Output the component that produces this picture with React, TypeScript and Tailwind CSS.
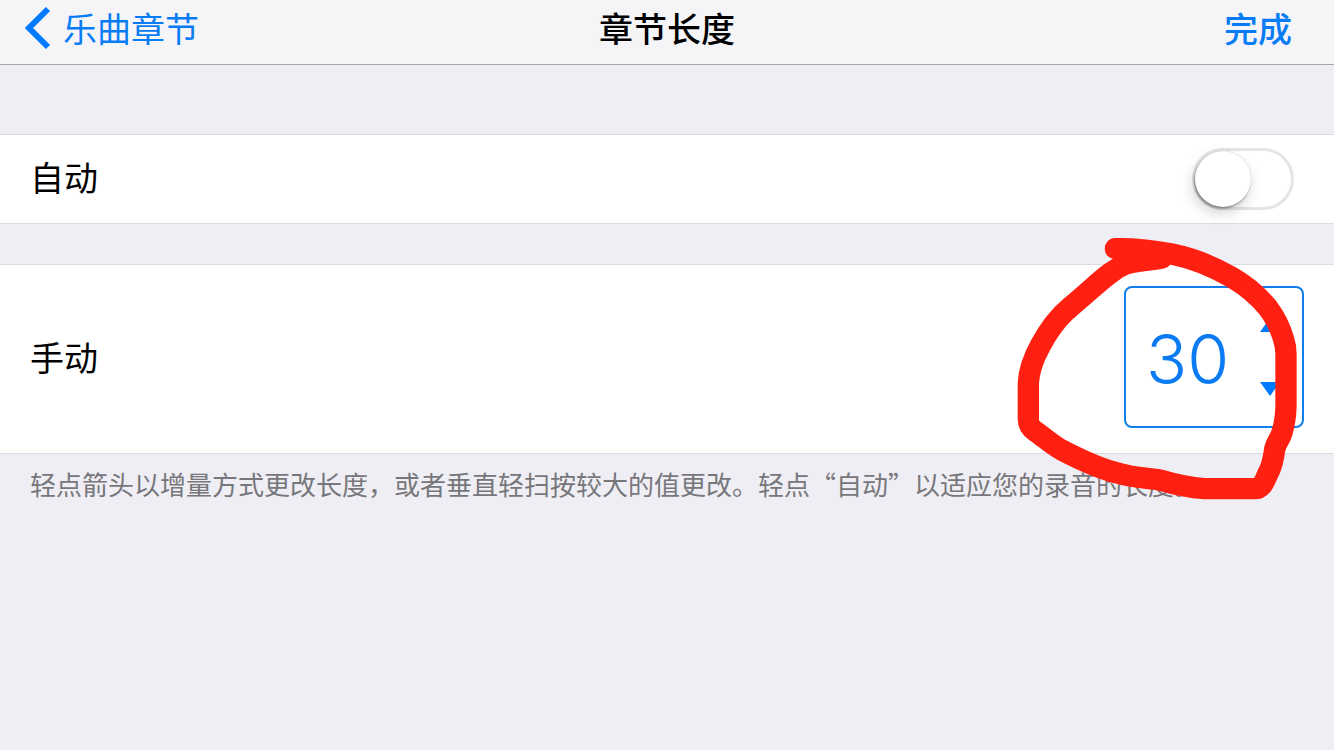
import React, { useState } from 'react'

const MIN_LENGTH = 1
const MAX_LENGTH = 999

interface LengthStepperProps {
  id: string
  value: number
  onChange: (value: number) => void
}

const LengthStepper: React.FC<LengthStepperProps> = ({
  id,
  value,
  onChange,
}) => {
  const update = (next: number) => {
    if (Number.isNaN(next)) return
    onChange(Math.min(MAX_LENGTH, Math.max(MIN_LENGTH, next)))
  }

  return (
    <div className="flex h-[142px] w-[180px] items-center justify-between rounded-lg border-2 border-[#117eeb] bg-white px-5">
      <input
        id={id}
        type="text"
        inputMode="numeric"
        value={value}
        onChange={(e) => update(parseInt(e.target.value, 10))}
        className="w-24 bg-transparent pt-1 font-['Inter',sans-serif] text-[68px] font-light leading-none text-[#0a7bf2] outline-none"
      />
      <div className="flex flex-col gap-[50px]">
        <button
          type="button"
          aria-label="增加"
          onClick={() => update(value + 1)}
          className="cursor-pointer px-0.5"
        >
          <svg width="20" height="14" viewBox="0 0 20 14" className="block">
            <path d="M10 0 20 14H0z" fill="#007aff" />
          </svg>
        </button>
        <button
          type="button"
          aria-label="减少"
          onClick={() => update(value - 1)}
          className="cursor-pointer px-0.5"
        >
          <svg width="20" height="14" viewBox="0 0 20 14" className="block">
            <path d="M0 0H20L10 14z" fill="#007aff" />
          </svg>
        </button>
      </div>
    </div>
  )
}

// Red marker stroke drawn around the stepper
const MarkerCircle: React.FC = () => (
  <svg
    width="334"
    height="280"
    viewBox="0 0 1002 840"
    fill="none"
    aria-hidden="true"
    className="pointer-events-none absolute -top-[34px] right-0 z-10"
  >
    <path
      d="M346 56 C400 55 465 62 515 72 C575 84 640 110 695 142 C740 168 775 198 805 235 C830 268 842 298 850 325 C856 343 858 355 858 372 L858 530 C857 560 853 585 846 608 C842 624 828 638 824 658 C820 690 816 705 808 722 C794 748 790 776 764 776 L614 776 C570 773 520 762 480 750 C440 744 395 742 360 731 C300 718 235 686 185 660 C155 643 130 620 106 604 C92 594 85 586 85 568 L85 460 C86 430 100 385 122 345 C145 302 172 263 212 230 C262 190 300 150 336 126 C365 104 385 98 415 94 C440 90 465 88 486 84"
      stroke="#ff2012"
      strokeWidth="64"
      strokeLinecap="round"
      strokeLinejoin="round"
    />
  </svg>
)

const App: React.FC = () => {
  const [isAuto, setIsAuto] = useState(false)
  const [length, setLength] = useState(30)

  return (
    <div className="min-h-screen bg-[#efeef4] font-['Noto_Sans_CJK_SC',sans-serif] text-black">
      <header className="grid h-[65px] grid-cols-3 items-center border-b border-[#a7a7ab] bg-[#f5f5f8] pb-2 text-[34px] leading-10">
        <a
          href="#sections"
          className="flex items-center gap-3 pl-6 text-[#087cf5]"
        >
          <svg width="27" height="44" viewBox="0 0 27 44" fill="none">
            <path d="M24 3 5 22 24 41" stroke="#007aff" strokeWidth="6" />
          </svg>
          <span>乐曲章节</span>
        </a>
        <h1 className="text-center font-medium">章节长度</h1>
        <button
          type="button"
          className="cursor-pointer justify-self-end pr-[42px] font-medium text-[#087cf5]"
        >
          完成
        </button>
      </header>

      <main className="pt-[69px] text-[34px] leading-10">
        <div className="flex h-[90px] items-center justify-between border-y border-[#dcdce0] bg-white pl-[30px] pr-10">
          <label htmlFor="auto-length" className="pb-1">
            自动
          </label>
          <input
            id="auto-length"
            type="checkbox"
            role="switch"
            checked={isAuto}
            onChange={(e) => setIsAuto(e.target.checked)}
            className="flex h-[62px] w-[102px] cursor-pointer appearance-none items-center rounded-full border-[3px] border-[#e5e5e5] bg-white before:block before:size-14 before:rounded-full before:bg-white before:shadow-[0_0_1px_rgba(0,0,0,0.3),-1px_2px_2px_rgba(0,0,0,0.3),-2px_6px_14px_rgba(0,0,0,0.18)] checked:justify-end checked:border-[#4cd964] checked:bg-[#4cd964]"
          />
        </div>

        <section className="relative mt-10">
          <div className="flex h-[190px] items-center justify-between border-y border-[#dcdce0] bg-white px-[30px] pb-1">
            <label htmlFor="manual-length">手动</label>
            <LengthStepper
              id="manual-length"
              value={length}
              onChange={setLength}
            />
          </div>
          <p className="px-[30px] pt-3 text-[26px] leading-9 text-[#77777b]">
            轻点箭头以增量方式更改长度，或者垂直轻扫按较大的值更改。轻点“自动”以适应您的录音的长度。
          </p>
          <MarkerCircle />
        </section>
      </main>
    </div>
  )
}

export default App
